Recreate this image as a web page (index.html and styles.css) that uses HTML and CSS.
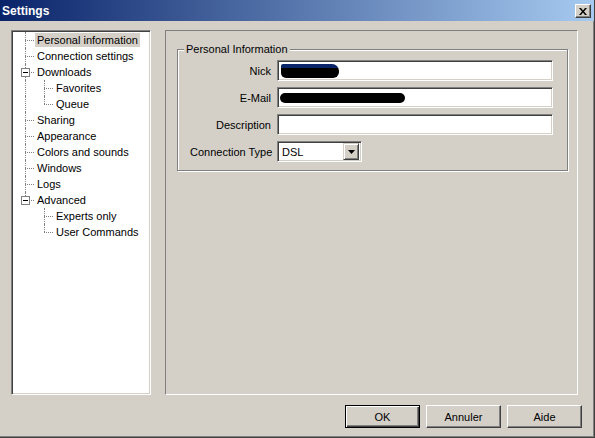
FILE: index.html
```html
<!DOCTYPE html>
<html lang="en">
<head>
  <meta charset="UTF-8">
  <title>Settings</title>
  <link rel="stylesheet" href="styles.css">
</head>
<body>
  <div class="window">
    <!-- Title bar -->
    <div class="titlebar">
      <span class="title">Settings</span>
      <button class="close" type="button">
        <svg width="8" height="7" viewBox="0 0 8 7"><path d="M0 0h2l2 2.4 2-2.4h2l-3 3.5 3 3.5h-2l-2-2.4-2 2.4h-2l3-3.5z" fill="#000"/></svg>
      </button>
    </div>

    <div class="dialog">
      <div class="main">
        <!-- Page tree -->
        <ul class="tree">
          <li class="row"><span class="g v h"></span><span class="label sel">Personal information</span></li>
          <li class="row"><span class="g v h"></span><span class="label">Connection settings</span></li>
          <li class="row"><span class="g v h"><span class="box"></span></span><span class="label">Downloads</span></li>
          <li class="row"><span class="g v"></span><span class="g v h"></span><span class="label">Favorites</span></li>
          <li class="row"><span class="g v"></span><span class="g v half h"></span><span class="label">Queue</span></li>
          <li class="row"><span class="g v h"></span><span class="label">Sharing</span></li>
          <li class="row"><span class="g v h"></span><span class="label">Appearance</span></li>
          <li class="row"><span class="g v h"></span><span class="label">Colors and sounds</span></li>
          <li class="row"><span class="g v h"></span><span class="label">Windows</span></li>
          <li class="row"><span class="g v h"></span><span class="label">Logs</span></li>
          <li class="row"><span class="g v half h"><span class="box"></span></span><span class="label">Advanced</span></li>
          <li class="row"><span class="g"></span><span class="g v h"></span><span class="label">Experts only</span></li>
          <li class="row"><span class="g"></span><span class="g v half h"></span><span class="label">User Commands</span></li>
        </ul>

        <!-- Page content -->
        <div class="panel">
          <div class="group">
            <span class="caption">Personal Information</span>
            <div class="form">
              <label class="flabel">Nick</label>
              <div class="field"><span class="ink nick"></span></div>
              <label class="flabel">E-Mail</label>
              <div class="field"><span class="ink mail"></span></div>
              <label class="flabel">Description</label>
              <div class="field"></div>
              <label class="flabel">Connection Type</label>
              <div class="field combo">
                <span class="value">DSL</span>
                <span class="drop">
                  <svg width="7" height="4" viewBox="0 0 7 4"><path d="M0 0h7l-3.5 4z" fill="#000"/></svg>
                </span>
              </div>
            </div>
          </div>
        </div>
      </div>

      <div class="buttons">
        <button class="btn default" type="button">OK</button>
        <button class="btn" type="button">Annuler</button>
        <button class="btn" type="button">Aide</button>
      </div>
    </div>
  </div>
</body>
</html>
```

FILE: styles.css
```css
* {
  box-sizing: border-box;
}

body {
  margin: 0;
  font-family: "Liberation Sans", Arial, sans-serif;
  font-size: 11px;
  color: #000;
  background: #d4d0c8;
}

.window {
  width: 595px;
  height: 438px;
  display: flex;
  flex-direction: column;
  background: #d4d0c8;
  border-right: 1px solid #404040;
  border-bottom: 1px solid #404040;
  box-shadow: inset -1px -1px 0 #808080;
}

/* Title bar */
.titlebar {
  height: 21px;
  flex: none;
  display: flex;
  align-items: center;
  justify-content: space-between;
  padding: 0 3px 0 2px;
  background: linear-gradient(to right, #0a246a, #a6caf0);
  color: #fff;
  font-weight: bold;
  font-size: 12px;
}
.close {
  width: 16px;
  height: 14px;
  align-self: flex-start;
  margin-top: 4px;
  padding: 0;
  display: flex;
  align-items: center;
  justify-content: center;
  background: #d4d0c8;
  border: 1px solid;
  border-color: #fff #404040 #404040 #fff;
  box-shadow: inset -1px -1px 0 #808080;
}

.dialog {
  flex: 1;
  display: flex;
  flex-direction: column;
  padding: 9px 16px 0 11px;
}
.main {
  display: flex;
  gap: 14px;
  height: 365px;
}

/* Tree */
.tree {
  width: 140px;
  margin: 0;
  padding: 1px 0 0 1px;
  list-style: none;
  background: #fff;
  border: 1px solid;
  border-color: #808080 #fff #fff #808080;
  box-shadow: inset 1px 1px 0 #404040, inset -1px -1px 0 #d4d0c8;
}
.row {
  display: flex;
  align-items: center;
  height: 16px;
}
.g {
  position: relative;
  flex: none;
  width: 19px;
  height: 16px;
}
.g.v::before {
  content: "";
  position: absolute;
  left: 12px;
  top: 0;
  bottom: 0;
  border-left: 1px dotted #808080;
}
.g.half::before {
  bottom: 8px;
}
.g.h::after {
  content: "";
  position: absolute;
  left: 12px;
  top: 8px;
  width: 9px;
  border-top: 1px dotted #808080;
}
.box {
  position: absolute;
  left: 8px;
  top: 4px;
  z-index: 1;
  width: 9px;
  height: 9px;
  background: #fff;
  border: 1px solid #808080;
}
.box::before {
  content: "";
  position: absolute;
  left: 1px;
  top: 3px;
  width: 5px;
  height: 1px;
  background: #000;
}
.label {
  margin-left: 3px;
  padding: 0 2px;
  line-height: 14px;
  white-space: nowrap;
}
.sel {
  background: #d4d0c8;
}

/* Right side */
.panel {
  flex: 1;
  padding: 18px 9px 0 11px;
  border: 1px solid;
  border-color: #808080 #fff #fff #808080;
}
.group {
  padding: 0 14px 8px 12px;
  border: 1px solid #808080;
  box-shadow: 1px 1px 0 #fff, inset 1px 1px 0 #fff;
}
.caption {
  display: table;
  margin: -7px 0 0 -6px;
  padding: 0 2px;
  line-height: 13px;
  background: #d4d0c8;
}
.form {
  display: grid;
  grid-template-columns: 81px 276px;
  grid-auto-rows: 21px;
  gap: 6px;
  margin-top: 4px;
}
.flabel {
  align-self: center;
  text-align: right;
  white-space: nowrap;
}
.field {
  display: flex;
  align-items: center;
  padding: 2px;
  background: #fff;
  border: 1px solid;
  border-color: #808080 #fff #fff #808080;
  box-shadow: inset 1px 1px 0 #404040, inset -1px -1px 0 #d4d0c8;
}
.ink {
  display: block;
  background: #000;
}
.nick {
  width: 58px;
  height: 14px;
  margin-left: 1px;
  background: linear-gradient(#0a246a 0 4px, #000 4px);
  border-radius: 2px 7px 6px 5px;
}
.mail {
  width: 125px;
  height: 10px;
  border-radius: 5px;
}
.combo {
  width: 85px;
  justify-content: space-between;
}
.value {
  padding-left: 2px;
}
.drop {
  width: 16px;
  height: 17px;
  display: flex;
  align-items: center;
  justify-content: center;
  background: #d4d0c8;
  border: 1px solid;
  border-color: #d4d0c8 #404040 #404040 #d4d0c8;
  box-shadow: inset 1px 1px 0 #fff, inset -1px -1px 0 #808080;
}

/* Buttons */
.buttons {
  display: flex;
  justify-content: flex-end;
  gap: 6px;
  margin: 10px -4px 0 0;
}
.btn {
  width: 75px;
  height: 23px;
  padding: 0;
  font: inherit;
  color: #000;
  background: #d4d0c8;
  border: 1px solid;
  border-color: #fff #404040 #404040 #fff;
  box-shadow: inset -1px -1px 0 #808080;
}
.btn.default {
  border-color: #000;
  box-shadow: inset 1px 1px 0 #fff, inset -1px -1px 0 #404040, inset -2px -2px 0 #808080;
}
```
